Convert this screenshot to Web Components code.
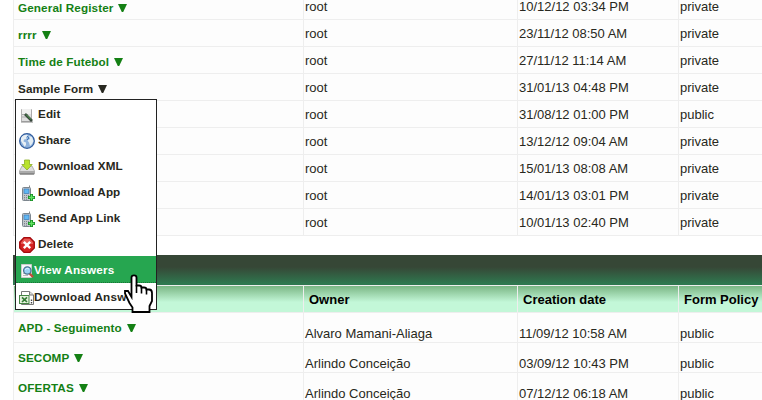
<!DOCTYPE html>
<html lang="en"><head><meta charset="utf-8"><title>Forms</title>
<style>
html,body{margin:0;height:400px;overflow:hidden;background:#fff}
body{font-family:"Liberation Sans",Arial,sans-serif;font-size:13px;color:#282820}
</style></head><body>
<forms-page></forms-page>
<script>
const define=(name,css,html)=>customElements.define(name,class extends HTMLElement{
  connectedCallback(){
    if(this.shadowRoot)return;
    const r=this.attachShadow({mode:'open'});
    r.innerHTML=`<style>${css}</style>`+(typeof html==='function'?html(this):html);
  }
});
const icons={
edit:`<path d="M2.5 2.5H12.5V14.5H2.5Z" fill="#dedede" stroke="#b0b0b0"/><path d="M3 2H12V7H3Z" fill="#f0f0f0"/><path d="M3 7.5H9M3 10H8M12.5 3V10" stroke="#aaa"/><path d="M2 15H14" stroke="#888"/><path d="M6 7L13 14" stroke="#35463a" stroke-width="2.6"/><path d="M7 7.4L12 12.5" stroke="#58a856" stroke-width="1"/>`,
share:`<circle cx="8" cy="8" r="7.3" fill="#8fb2dc" stroke="#315c9c" stroke-width="1.3"/><path d="M2 5Q4 1.5 8 1.7L9 3L7 4L7.5 6L5 6.5L4.5 8.5L7 9.5L7 12L5.5 13.8L4 11L2 8Z" fill="#e8eff4"/><path d="M10 3L13 4L14.5 8L13 11L11 13L10 9.5L8.5 7.5L11 6Z" fill="#e3edf3"/><path d="M8 3L10 5L8 7" stroke="#487ab6" fill="none"/>`,
xml:`<path d="M3 7H13L15.5 12V15H.5V12Z" fill="#ddd" stroke="#999" stroke-width=".7"/><path d="M.5 12H15.5V15H.5Z" fill="#aaa"/><path d="M1 15H15" stroke="#666"/><path d="M5.5 1H10.5V5.5H13.2L8 11L2.8 5.5H5.5Z" fill="#b9e32d" stroke="#8aad24" stroke-width=".8"/>`,
phone:`<path d="M10.5 .5V4" stroke="#888"/><rect x="3.5" y="2.5" width="8" height="13" rx="1" fill="#c3c8cd" stroke="#7d868e"/><rect x="5" y="4" width="5" height="4.5" fill="#60b7f3" stroke="#3c79b5" stroke-width=".7"/><path d="M5 10.5H10M5 12.5H10M5 14.2H9" stroke="#7c858d" stroke-dasharray="1 1"/><path d="M12.5 9V16M9 12.5H16" stroke="#178c26" stroke-width="3"/><path d="M12.5 9.8V15.2M9.8 12.5H15.2" stroke="#62e361" stroke-width="1.3"/>`,
del:`<path d="M5 .7H11L15.3 5V11L11 15.3H5L.7 11V5Z" fill="#d42323" stroke="#a50b0e" stroke-width="1.3"/><path d="M5.3 1.8H10.7L14 5.5V7H2V5.5Z" fill="#e65a56"/><path d="M4.8 4.8L11.2 11.2M11.2 4.8L4.8 11.2" stroke="#fff" stroke-width="2.4"/>`,
view:`<path d="M2.5 1.5H12.5V14.5H2.5Z" fill="#f8f8f8" stroke="#ccc"/><path d="M4 10.5H7M4 12.5H9" stroke="#bbb"/><path d="M10.5 10.5L14 14" stroke="#c34d38" stroke-width="2.4"/><circle cx="8.3" cy="7.5" r="3.7" fill="#9bd3f6" stroke="#4b7391" stroke-width="1.3"/><path d="M6.2 6.8Q8 4 10 6" stroke="#e2f5ff" fill="none"/>`,
xls:`<path d="M2.5 1.5H10.5L14.5 5V14.5H2.5Z" fill="#fff" stroke="#777"/><path d="M10.5 1.5V5H14.5" fill="#ddd" stroke="#777"/><path d="M12.5 9.5V13.5" stroke="#444" stroke-width="1.4" stroke-dasharray="1.5 1"/><rect x=".5" y="5.5" width="9.5" height="8" fill="#e5f2de" stroke="#448443"/><path d="M3 7.3L8 12M8 7.3L3 12" stroke="#347c36" stroke-width="1.7"/>`};
define('form-link',`:host{display:inline-block;font-weight:bold;font-size:11.7px;letter-spacing:.12px;line-height:14px;color:#148014;white-space:pre}:host([active]){color:#282820}svg{width:9px;height:8px;margin-left:5px;vertical-align:0;fill:currentColor}`,
 `<slot></slot><svg viewBox="0 0 9 8"><path d="M0 0H9L5.2 8H3.8Z"/></svg>`);
define('form-row',`:host{display:grid;grid-template-columns:290px 214px 161px 1fr;height:var(--h,27px);box-sizing:border-box}
div{box-sizing:border-box;border:solid #eee;border-width:0 0 1px 1px;background:#fdfdfd;padding:var(--cell,6px) 0 0 1px;line-height:15px;white-space:nowrap}
div:first-of-type{padding:var(--name,8px) 0 0 4px;line-height:14px}`,
 e=>{const[n,o,d,p]=e.getAttribute('data').split('|');return `<div>${n?`<form-link ${e.hasAttribute('active')?'active':''}>${n}</form-link>`:''}</div><div>${o}</div><div>${d}</div><div>${p}</div>`});
define('form-head',`:host{display:block;color:#000;font-weight:bold}.bar{height:30px;background:linear-gradient(#364736 0 40%,#2f774f 95%)}
.h{display:grid;grid-template-columns:290px 214px 161px 1fr;height:28px}
.h div{box-sizing:border-box;border:solid #eee;border-width:1px 0 1px 1px;padding:6px 0 0 5px;line-height:15px;white-space:nowrap;background:linear-gradient(#7ab684,#c3f7d8 62%)}`,
 `<div class="bar"></div><div class="h"><div></div><div>Owner</div><div>Creation date</div><div>Form Policy</div></div>`);
define('menu-item',`:host{display:flex;height:26px;box-sizing:border-box;padding:1px 0 0 3px;align-items:center;font:bold 11.7px/14px "Liberation Sans",Arial,sans-serif;letter-spacing:.08px;white-space:nowrap;overflow:hidden}
:host([tight]) span{margin-left:-1px;letter-spacing:.2px}:host([on]){height:27px;background:#26a650;color:#fff;border-bottom:1px dotted #187537}svg{width:16px;height:16px;flex:none;margin-top:2px}span{margin-left:3px}`,
 e=>`<svg viewBox="0 0 16 16">${icons[e.getAttribute('icon')]}</svg><span><slot></slot></span>`);
define('context-menu',`:host{display:block;position:absolute;left:15px;top:99px;width:142px;height:211px;box-sizing:border-box;background:#fff;border:1px solid #222}`,`<slot></slot>`);
define('hand-cursor',`:host{display:block;position:absolute;left:122px;top:273px;width:32px;height:42px}svg{display:block}`,
`<svg width="32" height="42" viewBox="0 0 32 42"><path d="M9.5 24V4.5Q9.5 2.3 12 2.3T14.5 4.5V12.5H17Q19.5 12.5 19.5 14.5H22Q24.5 14.5 24.5 16.5H27Q30 16.5 30 20V28L27.5 33V39H10.5V34.5L7.5 30L3 20.5V18H6Z" fill="#fff" stroke="#000" stroke-width="1.8"/><path d="M14.5 12V20M19.5 14V20.5M24.5 16V21.5" stroke="#000" stroke-width="1.6"/></svg>`);
const row=(d,a='')=>`<form-row data="${d}" ${a}></form-row>`;
define('forms-page',`:host{display:block;height:400px;overflow:hidden;position:relative;box-sizing:border-box;padding-left:13px}
.a{margin-top:-7px}.b{--h:30px;--cell:13px;--name:8px;margin-top:19px}`,
`<div class="a">${row('General Register|root|10/12/12 03:34 PM|private')+row('rrrr|root|23/11/12 08:50 AM|private')+row('Time de Futebol|root|27/11/12 11:14 AM|private')+row('Sample Form|root|31/01/13 04:48 PM|private','active')+row('|root|31/08/12 01:00 PM|public')+row('|root|13/12/12 09:04 AM|private')+row('|root|15/01/13 08:08 AM|private')+row('|root|14/01/13 03:01 PM|private')+row('|root|10/01/13 02:40 PM|private')}</div>
<div class="b"><form-head></form-head>${row('APD - Seguimento|Alvaro Mamani-Aliaga|11/09/12 10:58 AM|public')+row('SECOMP|Arlindo Conceição|03/09/12 10:43 PM|public')+row('OFERTAS|Arlindo Conceição|07/12/12 06:18 AM|public')}</div>
<context-menu><menu-item icon="edit">Edit</menu-item><menu-item icon="share">Share</menu-item><menu-item icon="xml">Download XML</menu-item><menu-item icon="phone">Download App</menu-item><menu-item icon="phone">Send App Link</menu-item><menu-item icon="del">Delete</menu-item><menu-item icon="view" on tight>View Answers</menu-item><menu-item icon="xls" tight>Download Answ</menu-item></context-menu><hand-cursor></hand-cursor>`);
</script></body></html>
